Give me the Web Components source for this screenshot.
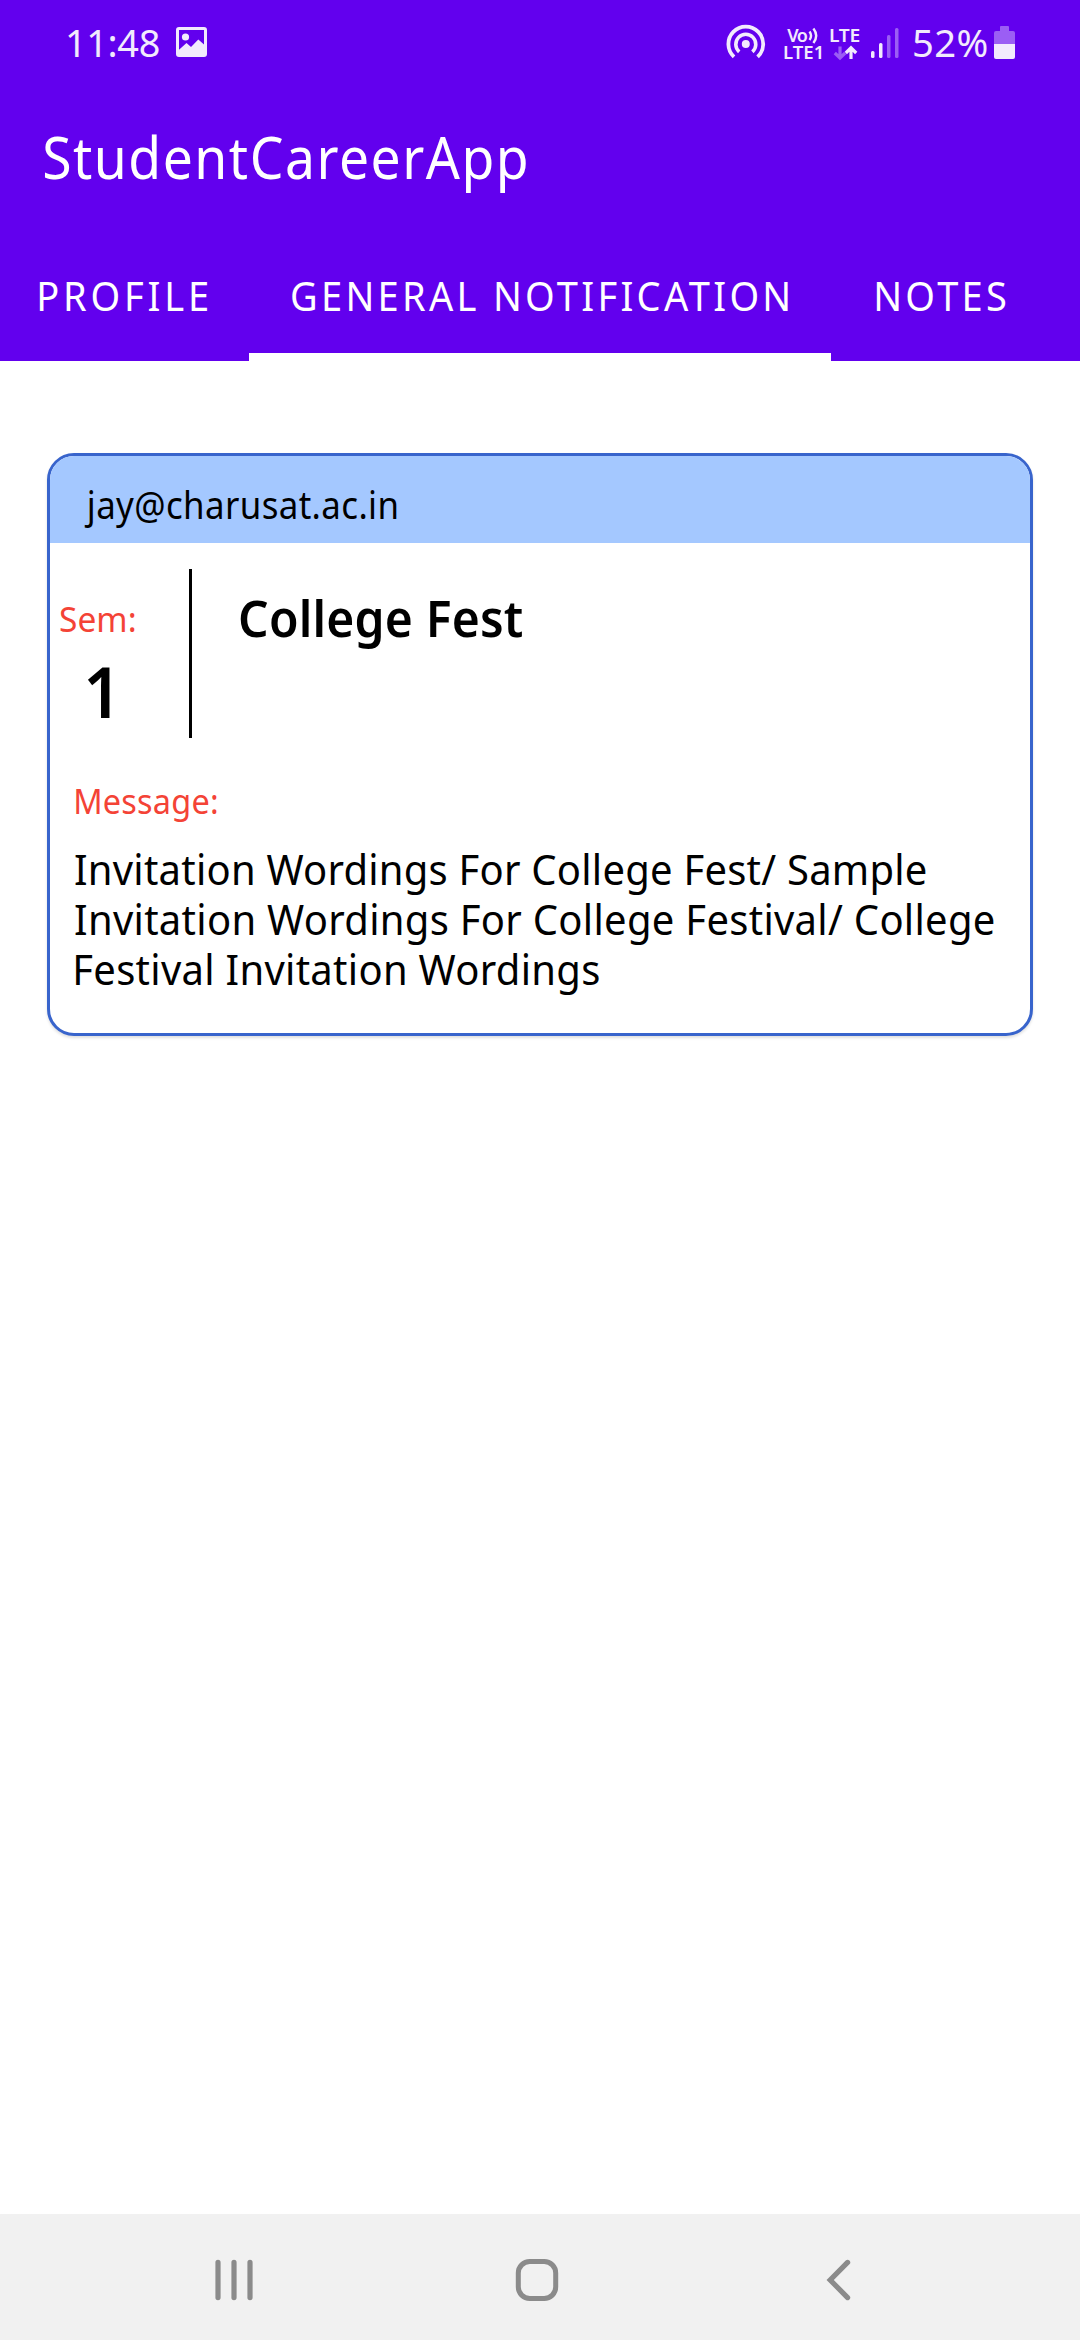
<!DOCTYPE html>
<html lang="en">
<head>
<meta charset="utf-8">
<title>StudentCareerApp</title>
<style>
html,body{margin:0;padding:0;background:#fff}
body{font-family:"Noto Sans","Open Sans",sans-serif}
</style>
</head>
<body>
<app-screen></app-screen>
<script>
const define = (name, html, after) => customElements.define(name, class extends HTMLElement {
  constructor() {
    super();
    const t = document.createElement('template');
    t.innerHTML = html;
    this.attachShadow({mode: 'open'}).append(t.content.cloneNode(true));
  }
  connectedCallback() { if (after) after(this); }
});

// One line of type: s = size, w = inked width, k = horizontal condensing, wt = weight.
// The tracking is derived so that the inked text spans exactly w.
const pen = document.createElement('canvas').getContext('2d');
define('type-line', `<style>
:host{display:block;white-space:pre;line-height:1;flex:none}
span{display:inline-block;transform-origin:0 0;vertical-align:top}
</style><span><slot></slot></span>`, el => {
  const text = el.textContent, s = +el.getAttribute('s'), w = +el.getAttribute('w');
  const wt = el.getAttribute('wt') || 400;
  let k = +(el.getAttribute('k') || .9);
  pen.font = `${wt} ${s}px "Noto Sans"`;
  const m = pen.measureText(text);
  const ink = m.actualBoundingBoxLeft + m.actualBoundingBoxRight;
  let ls = 0;
  if (text.length > 1) ls = (w / k - ink) / (text.length - 1); else k = w / ink;
  el.style.cssText += `;width:${w}px;height:${s}px;font-size:${s}px;font-weight:${wt}`;
  const span = el.shadowRoot.querySelector('span');
  span.style.letterSpacing = ls + 'px';
  span.style.transform = `scaleX(${k}) translateX(${m.actualBoundingBoxLeft}px)`;
});

define('status-bar', `<style>
:host{display:flex;height:90px;box-sizing:border-box;color:#f2eafd;align-items:flex-start;justify-content:space-between;padding:0 65px 0 68px}
div{display:flex;align-items:flex-start}
svg{display:block;flex:none}
.net{flex-direction:column;align-items:center}
</style>
<div><type-line s="39" w="91" k=".97" style="margin-top:22.4px">11:48</type-line>
<svg style="margin:27px 0 0 17px" width="31" height="30" viewBox="0 0 31 30"><path fill="currentColor" fill-rule="evenodd" d="M3 0H28Q31 0 31 3V27Q31 30 28 30H3Q0 30 0 27V3Q0 0 3 0ZM3 3V22.8L10.5 16L15 20L22.3 12.5L28 17.5V3Z"/><circle cx="9.5" cy="10" r="3.6" fill="currentColor"/></svg></div>
<div>
<svg style="margin-top:24px" width="40" height="36" viewBox="0 0 40 36" fill="none" stroke="currentColor" stroke-width="3.8"><circle cx="19.8" cy="20" r="4" fill="currentColor" stroke="none"/><path d="M8 32.8A17.4 17.4 0 1 1 31.6 32.8"/><path d="M13.2 27.8A10 10 0 1 1 26.4 27.8" stroke-width="3.6"/></svg>
<div class="net" style="margin:25.5px 0 0 18px">
<div><type-line s="18" w="20.5" k="1" wt="600">Vo</type-line><svg style="margin-top:1px" width="11" height="18" viewBox="0 0 11 18" fill="none" stroke="currentColor" stroke-width="2.4"><path d="M1.5 4.5Q4.6 8.8 1.5 13M5.4 1.6Q11 8.8 5.4 16"/></svg></div>
<type-line s="18" w="38" k="1.03" wt="600" style="margin-top:-1.5px">LTE1</type-line></div>
<div class="net" style="margin:25.5px 0 0 8px">
<type-line s="18.5" w="30" k="1.04" wt="600">LTE</type-line>
<svg style="margin-top:1px" width="26" height="16" viewBox="0 0 26 16" fill="none" stroke="currentColor" stroke-width="3.2"><path opacity=".4" d="M8 1.5V13M2.8 8L8 13L13.2 8"/><path d="M19 14V3M13.8 8L19 2.8L24.2 8"/></svg></div>
<svg style="margin:27px 0 0 11px" width="28" height="32" viewBox="0 0 28 32" fill="currentColor"><rect y="24" width="3.5" height="7" rx="1.5"/><rect x="8" y="16" width="3.5" height="15" rx="1.5"/><g opacity=".4"><rect x="16" y="8" width="3.5" height="23" rx="1.5"/><rect x="24" y="1" width="3.5" height="30" rx="1.5"/></g></svg>
<type-line s="39" w="73" k=".98" style="margin:22.4px 0 0 15px">52%</type-line>
<svg style="margin:26px 0 0 7px" width="21" height="33" viewBox="0 0 21 33" fill="currentColor"><path opacity=".4" d="M6 1Q6 0 7 0H14Q15 0 15 1V5H19Q21 5 21 7V18H0V7Q0 5 2 5H6Z"/><path d="M0 18H21V31Q21 33 19 33H2Q0 33 0 31Z"/></svg>
</div>`);

define('tab-item', `<style>
:host{display:flex;flex:none;height:117px;box-sizing:border-box;padding-top:32px;justify-content:center}
:host([active]){border-bottom:8px solid #fff}
</style><slot></slot>`);

define('app-header', `<style>
:host{display:flex;flex-direction:column;height:361px;background:#6200ee;color:#fff}
.title{height:154px;box-sizing:border-box;padding:39px 0 0 44.2px}
nav{display:flex;width:1080px;overflow:hidden}
</style>
<status-bar></status-bar>
<div class="title"><type-line s="57.5" w="482.5" k=".93">StudentCareerApp</type-line></div>
<nav>
<tab-item style="width:249px;padding-right:3px"><type-line s="40" w="168" k=".95">PROFILE</type-line></tab-item>
<tab-item active style="width:582px"><type-line s="40" w="496" k=".95">GENERAL NOTIFICATION</type-line></tab-item>
<tab-item style="width:220px"><type-line s="40" w="130" k=".95">NOTES</type-line></tab-item>
</nav>`);

define('notice-card', `<style>
:host{display:block;width:986px;height:583px;box-sizing:border-box;border:3px solid #3864cc;border-radius:27px;overflow:hidden;background:#fff;color:#000;box-shadow:0 2px 3px rgba(0,0,0,.13)}
.from{height:87px;background:#a4c8ff;box-sizing:border-box;padding:30px 0 0 34px}
.row{display:flex;height:195px;box-sizing:border-box;padding-top:26px}
.sem{width:139px;box-sizing:border-box;padding:33.4px 0 0 9.5px}
.rule{width:3px;height:169px;background:#000}
.head{padding:23.6px 0 0 48px}
.body{padding:46.4px 0 0 26px}
.red{color:#f44336}
</style>
<div class="from"><slot name="from"></slot></div>
<div class="row"><div class="sem"><type-line class="red" s="34.5" w="74.5" k=".97">Sem:</type-line><slot name="sem"></slot></div><div class="rule"></div><div class="head"><slot name="title"></slot></div></div>
<div class="body"><type-line class="red" s="34.5" w="140.5" k=".94">Message:</type-line><slot></slot></div>`);

define('nav-bar', `<style>
:host{display:flex;height:126px;background:#f1f1f1;justify-content:space-between;align-items:flex-start;box-sizing:border-box;padding:43px 227px 0 213px}
svg{display:block}
.home{margin-right:7px}
</style>
<svg width="42" height="46" fill="none" stroke="#8b8b8b" stroke-width="5.2" stroke-linecap="round"><path d="M5 5.4V40.6M21 5.4V40.6M37 5.4V40.6"/></svg>
<svg class="home" width="46" height="46" fill="none" stroke="#8b8b8b" stroke-width="5"><rect x="4.3" y="4.5" width="37.4" height="37" rx="11.5"/></svg>
<svg width="28" height="46" fill="none" stroke="#8b8b8b" stroke-width="5.2" stroke-linecap="round"><path d="M22.6 5.4L5.2 23L22.6 40.6"/></svg>`);

define('app-screen', `<style>
:host{display:flex;flex-direction:column;width:1080px;height:2340px;background:#fff}
main{flex:1;padding:92px 0 0 47px}
</style>
<app-header></app-header>
<main><notice-card>
<type-line slot="from" s="37.5" w="313" k=".93">jay@charusat.ac.in</type-line>
<type-line slot="sem" s="70" w="23" wt="600" style="margin:19.6px 0 0 27px">1</type-line>
<type-line slot="title" s="50" w="282" k=".96" wt="600">College Fest</type-line>
<type-line s="42.5" w="850.5" k=".94" style="margin:29px 0 0 -1.5px">Invitation Wordings For College Fest/ Sample</type-line>
<type-line s="42.5" w="918.5" k=".94" style="margin:7.5px 0 0 -1.5px">Invitation Wordings For College Festival/ College</type-line>
<type-line s="42.5" w="523" k=".94" style="margin-top:7.5px">Festival Invitation Wordings</type-line>
</notice-card></main>
<nav-bar></nav-bar>`);
</script>
</body>
</html>
